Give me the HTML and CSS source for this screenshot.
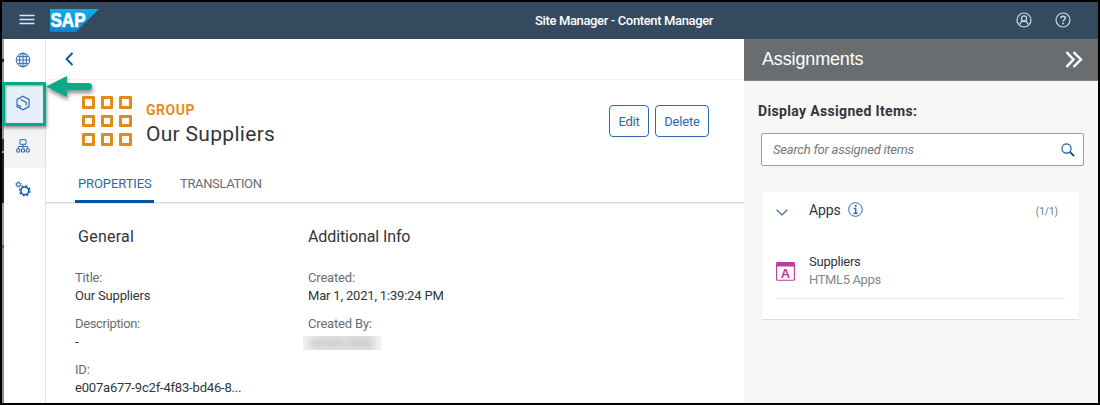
FILE: index.html
```html
<!DOCTYPE html>
<html lang="en">
<head>
<meta charset="utf-8">
<title>Site Manager - Content Manager</title>
<link rel="stylesheet" href="styles.css">
</head>
<body>
<div class="window">
  <header class="shell">
    <svg class="menu-icon" width="16" height="12" viewBox="0 0 16 12"><path d="M.5 1.500h15M.5 5.500h15M.5 9.500h15" stroke="#d1e8ff" stroke-width="1.400"/></svg>
    <svg class="logo" width="49" height="23" viewBox="0 0 49 23">
      <defs><linearGradient id="sap" x1="0" y1="0" x2="0" y2="1"><stop offset="0" stop-color="#12aeea"/><stop offset="1" stop-color="#0d83d0"/></linearGradient></defs>
      <path d="M0 0h49L26 23H0z" fill="url(#sap)"/>
      <text x="0.500" y="18.200" class="logo-text" textLength="35" lengthAdjust="spacingAndGlyphs">SAP</text>
    </svg>
    <div class="shell-title">Site Manager - Content Manager</div>
    <svg class="user-icon" width="16" height="16" viewBox="0 0 16 16" fill="none" stroke="#c5dcf2" stroke-width="1.200"><circle cx="8" cy="8" r="7"/><circle cx="8" cy="6.500" r="2.600"/><path d="M4 12.500c.3-2 1.600-3.400 4-3.400s3.700 1.400 4 3.400"/></svg>
    <svg class="help-icon" width="16" height="16" viewBox="0 0 16 16" fill="none" stroke="#c5dcf2" stroke-width="1.200"><circle cx="8" cy="8" r="7"/><path d="M5.800 6.200C5.800 3.400 10.400 3.500 10.300 6.100c0 1.600-2.200 1.700-2.200 3.500" stroke-width="1.500"/><path d="M8.100 10.800v1.500" stroke-width="1.700"/></svg>
  </header>
  <div class="body">
    <div class="edge"></div>
    <nav class="rail">
      <div class="rail-item">
        <svg width="16" height="16" viewBox="0 0 16 16" fill="none" stroke="#2c69ae" stroke-width="1"><circle cx="8" cy="8" r="6.800"/><ellipse cx="8" cy="8" rx="3.500" ry="6.800"/><path d="M8 1v14M1.200 8h13.600M2.200 4.700h11.600M2.200 11.300h11.600"/></svg>
      </div>
      <div class="rail-item selected">
        <svg width="16" height="16" viewBox="0 0 16 16" fill="none" stroke="#2c69ae" stroke-width="1.100"><path d="M8 1.200l6 3.200v7.200l-6 3.200-6-3.200V4.400z"/><path d="M5.800 4.600l5.400 2.800v3.200M2.200 9.800l3.200 1.500-.8 1.600"/></svg>
      </div>
      <div class="rail-item hover">
        <svg width="14" height="14" viewBox="0 0 14 14" fill="none" stroke="#2c69ae" stroke-width="1"><path d="M4 .7h6v4.600H4zM7 5.300v4M2.300 10V7.500h9.400V10M.8 10h3v3h-3zM5.500 10h3v3h-3zM10.200 10h3v3h-3z"/></svg>
      </div>
      <div class="rail-item">
        <svg width="16" height="16" viewBox="0 0 16 16" fill="none" stroke="#0854a0"><circle cx="9.800" cy="9.800" r="3.900" stroke-width="1.500"/><circle cx="9.800" cy="9.800" r="5.200" stroke-width="1.200" stroke-dasharray="2.040 2.040"/><circle cx="3.500" cy="3.500" r="1.900" stroke-width="1"/><circle cx="3.500" cy="3.500" r="2.700" stroke-width=".8" stroke-dasharray="1.060 1.060"/></svg>
      </div>
    </nav>
    <main class="main">
      <div class="backbar"><svg width="9" height="14" viewBox="0 0 9 14" fill="none" stroke="#0854a0" stroke-width="1.800"><path d="M7.500 1L1.500 7l6 6"/></svg></div>
      <section class="object">
        <div class="tiles"><i></i><i></i><i></i><i></i><i></i><i></i><i></i><i></i><i></i></div>
        <div class="heading"><div class="kind">GROUP</div><h1 class="name">Our Suppliers</h1></div>
        <div class="actions"><button class="btn edit">Edit</button><button class="btn delete">Delete</button></div>
      </section>
      <div class="tabs"><div class="tab active">PROPERTIES</div><div class="tab other">TRANSLATION</div></div>
      <section class="info">
        <div class="col">
          <h2 class="general">General</h2>
          <dl><dt>Title:</dt><dd>Our Suppliers</dd><dt class="description">Description:</dt><dd>-</dd><dt>ID:</dt><dd>e007a677-9c2f-4f83-bd46-8...</dd></dl>
        </div>
        <div class="col">
          <h2 class="additional">Additional Info</h2>
          <dl><dt>Created:</dt><dd>Mar 1, 2021, 1:39:24 PM</dd><dt>Created By:</dt><dd><div class="redacted"><b></b><b></b></div></dd></dl>
        </div>
      </section>
    </main>
    <aside class="side">
      <div class="side-head"><span>Assignments</span><svg width="18" height="17" viewBox="0 0 18 17" fill="none" stroke="#fff" stroke-width="2.400"><path d="M1.500 1.200l7 7.300-7 7.300M8.500 1.200l7.500 7.300-7.500 7.300"/></svg></div>
      <div class="side-body">
        <div class="label">Display Assigned Items:</div>
        <div class="search"><span>Search for assigned items</span><svg width="14" height="14" viewBox="0 0 14 14" fill="none" stroke="#0854a0"><circle cx="5.500" cy="5.500" r="4.600" stroke-width="1.100"/><path d="M8.900 8.900l4.200 4.200" stroke-width="2"/></svg></div>
        <div class="card">
          <div class="card-head">
            <svg class="chev" width="12" height="7" viewBox="0 0 12 7" fill="none" stroke="#2c69ae" stroke-width="1.200"><path d="M.7.800L6 6l5.300-5.200"/></svg>
            <span class="apps">Apps</span>
            <svg class="info-icon" width="15" height="15" viewBox="0 0 15 15" fill="none" stroke="#2c69ae"><circle cx="7.500" cy="7.500" r="6.800"/><path d="M7.700 3v1.700" stroke-width="1.800"/><path d="M5.800 6.500h1.900v4.800M5.500 11.300h4.200" stroke-width="1.400"/></svg>
            <span class="count">(1/1)</span>
          </div>
          <div class="row">
            <svg width="19" height="19" viewBox="0 0 19 19"><rect x=".6" y=".6" width="17.800" height="17.600" rx="1" fill="#fff" stroke="#c0399f" stroke-width="1.100"/><path d="M.5.500h18v4H.5z" fill="#c0399f"/><text x="9.500" y="15.600" text-anchor="middle" class="app-letter">A</text></svg>
            <div><div class="app-name">Suppliers</div><div class="app-type">HTML5 Apps</div></div>
          </div>
        </div>
      </div>
    </aside>
  </div>
  <div class="marker"></div>
  <svg class="arrow" width="54" height="32" viewBox="0 0 54 32"><path d="M3 11.500L24 1v7h21.500a3.500 3.500 0 0 1 0 7H24v7z" fill="#0aa98a"/></svg>
</div>
</body>
</html>
```
FILE: styles.css
```css
* { box-sizing: border-box; }
body { margin: 0; font-family: Roboto, "Liberation Sans", sans-serif; font-size: 13px; color: #32363a; }
h1, h2, dl, dd { margin: 0; font-weight: 400; }
.window { position: relative; width: 1100px; height: 405px; border: 2px solid #000; overflow: hidden; display: flex; flex-direction: column; background: #fff; }
.shell { height: 37px; flex: none; background: #354a5f; display: flex; align-items: center; padding-left: 17px; }
.menu-icon { margin-top: -1px; }
.logo { margin-left: 15px; margin-top: -1px; }
.logo-text { font: 700 20px "Liberation Sans", sans-serif; fill: #fff; stroke: #fff; stroke-width: .7px; }
.shell-title { width: 200px; margin: -1px 0 0 436px; font-weight: 500; letter-spacing: -.36px; color: #fff; white-space: nowrap; }
.user-icon { margin: -1px 0 0 281px; }
.help-icon { margin: -1px 0 0 23px; }
.body { display: flex; flex: 1; min-height: 0; }
.edge { width: 2px; flex: none; background: linear-gradient(#999 20px, #222 20px 23px, #999 23px 100px, #333 100px 112px, #aaa 112px 114px, #1b2530 114px 164px, #999 164px 206px, #0a8a6c 206px 209px, #8c8c8c 209px); }
.rail { width: 42px; flex: none; border-right: 1px solid #e2e2e2; }
.rail-item { height: 43px; display: flex; align-items: center; justify-content: center; padding: 0 3px 1px 0; }
.selected { background: #e5f0fa; }
.hover { background: #f3f3f3; }
.main { width: 698px; flex: none; }
.backbar { height: 41px; border-bottom: 1px solid #f3f3f3; display: flex; align-items: center; padding: 0 0 1px 19px; }
.object { height: 85px; display: flex; padding: 16px 35px 0 36px; }
.tiles { display: grid; grid-template-columns: repeat(3, 12.6px); grid-auto-rows: 12.6px; gap: 6px; width: 51px; height: 51px; }
.tiles i { border: 3px solid #e38b16; border-radius: 1px; }
.heading { margin-left: 13px; padding-top: 5px; flex: 1; }
.kind { font-size: 14px; line-height: 18px; font-weight: 700; letter-spacing: .5px; color: #e78c1c; }
.name { font-size: 21px; line-height: 31px; letter-spacing: .3px; white-space: nowrap; }
.actions { display: flex; gap: 6px; padding-top: 9px; }
.btn { height: 32px; padding: 0; border: 1px solid #2c69ae; border-radius: 4px; background: #fff; font: 13px Roboto, sans-serif; letter-spacing: -.2px; color: #2c69ae; }
.edit { width: 40px; }
.delete { width: 54px; }
.tabs { height: 38px; display: flex; padding-left: 29px; border-bottom: 1px solid #ddd; box-shadow: 0 1px 1px #eee; }
.tab { height: 38px; line-height: 37px; color: #6a6d70; letter-spacing: -.36px; white-space: nowrap; }
.active { width: 79px; padding-left: 3px; color: #2c69ae; letter-spacing: -.1px; border-bottom: 3px solid #0854a0; }
.other { margin-left: 26px; }
.info { display: flex; padding: 23px 0 0 29px; }
.col { width: 233px; }
h2 { font-size: 16px; line-height: 22px; white-space: nowrap; }
.general { padding-left: 3px; letter-spacing: .25px; }
.additional { letter-spacing: -.1px; }
dl { padding-top: 21px; letter-spacing: -.18px; }
dt, dd { height: 18px; line-height: 18px; white-space: nowrap; }
dt { color: #6a6d70; }
.description { letter-spacing: -.34px; }
dd { margin-bottom: 10px; }
.redacted { width: 79px; height: 14px; margin: 3px 0 0 -5px; background: linear-gradient(90deg, #f0f0f0, #e3e4e4 20%, #dedede 85%, #f6f6f6); display: flex; align-items: center; gap: 4px; padding: 0 5px 0 7px; overflow: hidden; }
.redacted b { height: 6px; background: #c8c9ca; filter: blur(3px); width: 34px; }
.redacted b + b { width: 23px; }
.side { flex: 1; background: #f7f7f7; }
.side-head { height: 42px; background: #6a6d70; border-bottom: 1px solid #808285; color: #fff; font: 18px "Liberation Sans", Arial, sans-serif; letter-spacing: -.15px; display: flex; justify-content: space-between; align-items: center; padding: 0 15px 0 18px; }
.side-body { padding: 20px 14px 0 17px; }
.label { line-height: 20px; font-size: 14px; font-weight: 700; letter-spacing: .34px; margin-left: -3px; white-space: nowrap; }
.search { height: 33px; margin-top: 12px; border: 1px solid #9a9da1; border-radius: 2px; background: #fff; display: flex; align-items: center; justify-content: space-between; padding: 0 8px 0 11px; color: #74777a; font-style: italic; letter-spacing: -.22px; }
.card { width: 317px; height: 127px; margin: 26px 0 0 1px; background: #fff; box-shadow: 0 1px 1px #ddd; padding: 0 14px; }
.card-head { height: 37px; display: flex; align-items: center; padding-bottom: 2px; }
.chev { margin: 5px 0 0; }
.apps { margin-left: 21px; font-size: 14px; letter-spacing: -.1px; }
.info-icon { margin-left: 7px; }
.count { margin-left: auto; margin-right: 7px; font-size: 10px; color: #74777a; padding-top: 3px; }
.row { height: 70px; display: flex; gap: 14px; align-items: center; border-bottom: 1px solid #e8e8e8; padding-top: 15px; }
.row div div { line-height: 18px; white-space: nowrap; }
.row > svg { margin-top: 0; }
.app-name { letter-spacing: -.25px; }
.app-type { color: #86898c; letter-spacing: -.38px; }
.app-letter { font: 700 13px "Liberation Sans", sans-serif; fill: #c0399f; }
.marker { position: absolute; left: 0; top: 80px; width: 44px; height: 44px; border: 3px solid #0aa98a; box-shadow: 1px 2px 3px rgba(0,0,0,.4), inset 1px 1px 2px rgba(0,0,0,.35); }
.arrow { position: absolute; left: 41px; top: 73px; filter: drop-shadow(1px 3px 2px rgba(0,0,0,.45)); }
```
